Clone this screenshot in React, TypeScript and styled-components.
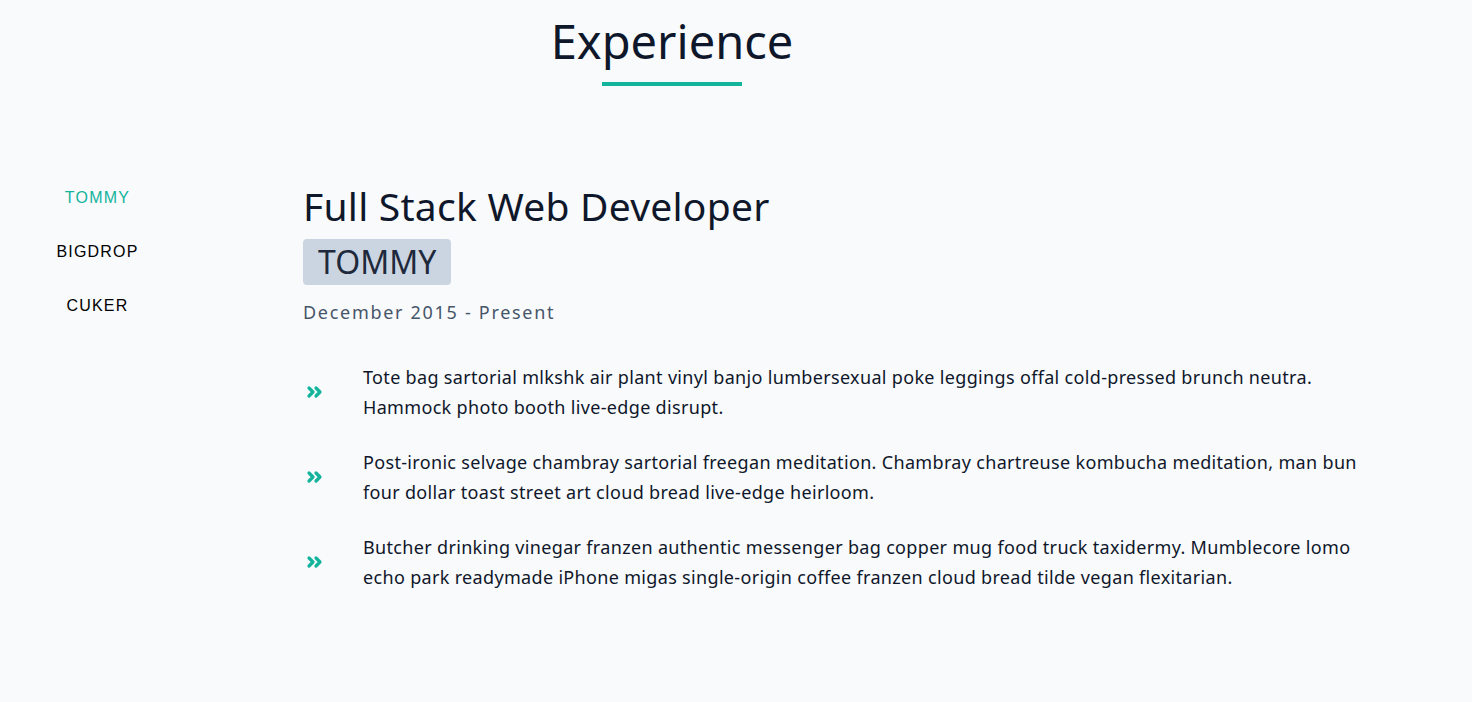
import React from "react";
import styled, { createGlobalStyle } from "styled-components";

const Global = createGlobalStyle`
  html, body { margin: 0; padding: 0; background: #f8fafc; }
  body { font-family: "Noto Sans", "Open Sans", sans-serif; color: #0f172a; }
  * { box-sizing: border-box; }
`;

const Page = styled.section`
  width: 100%;
  padding-top: 12px;
`;

const Header = styled.header`
  width: 1344px;
  display: flex;
  flex-direction: column;
  align-items: center;
`;

const Title = styled.h2`
  margin: 0;
  font-size: 47px;
  font-weight: 400;
  line-height: 58px;
  color: #0f172a;
`;

const Underline = styled.div`
  width: 140px;
  height: 4px;
  background: #14b39c;
  margin-top: 12px;
`;

const Body = styled.div`
  display: flex;
  margin-top: 85px;
`;

const Nav = styled.nav`
  width: 195px;
  flex-shrink: 0;
  display: flex;
  flex-direction: column;
  align-items: center;
  margin-right: 108px;
`;

const NavItem = styled.button<{ $active?: boolean }>`
  border: none;
  background: none;
  padding: 0;
  height: 54px;
  font-family: "Liberation Sans", Arial, sans-serif;
  font-size: 16px;
  letter-spacing: 1.2px;
  text-transform: uppercase;
  color: ${(p) => (p.$active ? "#14b39c" : "#000")};
  cursor: pointer;
`;

const Content = styled.div`
  flex: 1;
  padding-top: 12px;
`;

const Role = styled.h3`
  margin: 0;
  font-size: 39px;
  font-weight: 400;
  line-height: 46px;
  letter-spacing: 0.25px;
  color: #0f172a;
`;

const Badge = styled.span`
  display: inline-block;
  margin-top: 10px;
  background: #cbd5e1;
  border-radius: 4px;
  padding: 0 15px;
  height: 46px;
  line-height: 46px;
  font-size: 32px;
  letter-spacing: 0;
  color: #1e293b;
`;

const Dates = styled.p`
  margin: 15px 0 0;
  font-size: 18px;
  letter-spacing: 1.7px;
  color: #475569;
`;

const List = styled.ul`
  list-style: none;
  margin: 38px 0 0;
  padding: 0;
  display: flex;
  flex-direction: column;
  gap: 25px;
`;

const Item = styled.li`
  display: flex;
  align-items: center;
`;

const IconBox = styled.span`
  width: 60px;
  flex-shrink: 0;
  display: flex;
  align-items: center;
  padding-left: 2px;
  color: #14b39c;
`;

const Text = styled.p`
  margin: 0;
  font-size: 18px;
  line-height: 30px;
  letter-spacing: 0.33px;
  color: #0f172a;
  max-width: 1022px;
`;

const Chevrons = () => (
  <svg width="20" height="16" viewBox="0 0 20 16" fill="none" stroke="currentColor" strokeWidth="3.2" strokeLinecap="round" strokeLinejoin="round">
    <polyline points="4,4 8,8 4,12" />
    <polyline points="11,4 15,8 11,12" />
  </svg>
);

const items = [
  "Tote bag sartorial mlkshk air plant vinyl banjo lumbersexual poke leggings offal cold-pressed brunch neutra. Hammock photo booth live-edge disrupt.",
  "Post-ironic selvage chambray sartorial freegan meditation. Chambray chartreuse kombucha meditation, man bun four dollar toast street art cloud bread live-edge heirloom.",
  "Butcher drinking vinegar franzen authentic messenger bag copper mug food truck taxidermy. Mumblecore lomo echo park readymade iPhone migas single-origin coffee franzen cloud bread tilde vegan flexitarian.",
];

export default function App() {
  return (
    <>
      <Global />
      <Page>
        <Header>
          <Title>Experience</Title>
          <Underline />
        </Header>
        <Body>
          <Nav>
            <NavItem $active>Tommy</NavItem>
            <NavItem>Bigdrop</NavItem>
            <NavItem>Cuker</NavItem>
          </Nav>
          <Content>
            <Role>Full Stack Web Developer</Role>
            <Badge>TOMMY</Badge>
            <Dates>December 2015 - Present</Dates>
            <List>
              {items.map((t) => (
                <Item key={t}>
                  <IconBox>
                    <Chevrons />
                  </IconBox>
                  <Text>{t}</Text>
                </Item>
              ))}
            </List>
          </Content>
        </Body>
      </Page>
    </>
  );
}
